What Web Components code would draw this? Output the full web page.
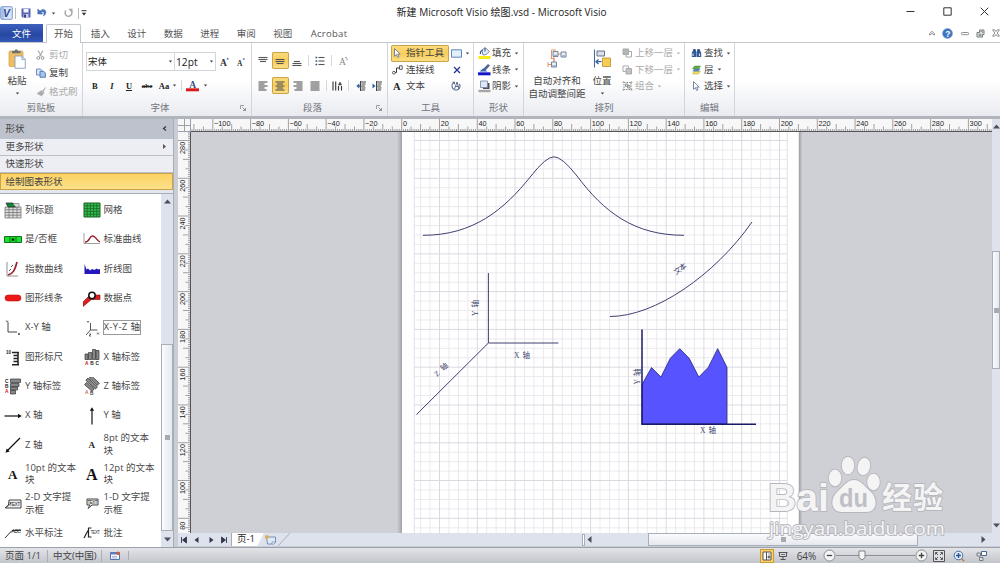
<!DOCTYPE html>
<html>
<head>
<meta charset="utf-8">
<title>新建 Microsoft Visio 绘图.vsd - Microsoft Visio</title>
<style>
  body {
    margin: 0;
    overflow: hidden;
    font: 9.5px/12px "Open Sans", "Noto Sans CJK SC", sans-serif;
    color: #444;
  }
</style>
</head>
<body>
<visio-window></visio-window>
<script>
const define = (name, html, init) => {
  const templ = document.createElement("template");
  templ.innerHTML = html;
  customElements.define(name, class extends HTMLElement {
    constructor() {
      super();
      this.attachShadow({mode: "open"});
      this.shadowRoot.appendChild(templ.content.cloneNode(true));
    }
    connectedCallback() {
      if (init) init(this, this.shadowRoot);
    }
  });
};

const lines = (rows) => rows.map(([x, y, w]) => `<path d="M${x} ${y}h${w}" stroke="#555" stroke-width="1.1"/>`).join("");

// name: [width, height, svg content]
const icons = {
  logo: [13, 14, `<rect x=".7" y=".7" width="11.6" height="12.6" rx="1" fill="#dbe6f7" stroke="#7d9cd0"/><path d="M1 1h3v12H1z" fill="#a9c0e6"/><text x="3" y="11" font-size="10.5" font-weight="bold" font-style="italic" font-family="Liberation Sans" fill="#2b4c9b">V</text>`],
  save: [10, 10, `<path d="M.5.5h9v9h-8l-1-1z" fill="#5663b5"/><path d="M2.500 1h5v3.500h-5z" fill="#f2f4fb"/><path d="M2.500 6h5v3.500h-5z" fill="#cfd4ea"/><path d="M3 6.500h2v3H3z" fill="#333f80"/>`],
  undo: [10, 10, `<path d="M.8 1v5h5L4.200 4.300c1.800-1.300 3.800-.3 2.300 3.700C10.300 5.500 9.300 1.200 5.500 1.600L3 3z" fill="#4a70b8" stroke="#4a70b8" stroke-width=".6"/>`],
  redo: [9, 10, `<path d="M6.500 2.200A3.400 3.400 0 1 1 2 2.600" fill="none" stroke="#aaa" stroke-width="1.500"/><path d="M4 1l4.500-.5v4z" fill="#aaa"/>`],
  caret: [5, 3, `<path d="M.8.5h3.400L2.500 2.500z" fill="#444"/>`],
  more: [6, 6, `<path d="M.5.7h5" stroke="#333"/><path d="M.7 2.800h4.600L3 5.500z" fill="#333"/>`],
  winmin: [9, 9, `<path d="M.5 4.500h8" stroke="#333"/>`],
  winmax: [9, 9, `<path d="M.8.8h7.400v7.400H.8z" fill="none" stroke="#333"/>`],
  winclose: [9, 9, `<path d="M.7.7l7.600 7.600m0-7.600L.7 8.300" stroke="#333"/>`],
  up: [8, 8, `<path d="M1.500 6V4.700L4 2.300l2.500 2.400V6L4 4.500z" fill="#fff" stroke="#777" stroke-width=".8"/>`],
  help: [11, 11, `<circle cx="5.500" cy="5.500" r="5" fill="#3e74bd" stroke="#87a9d8" stroke-width=".7"/><text x="3.200" y="8.600" font-size="8.500" font-weight="bold" font-family="Liberation Sans" fill="#fff">?</text>`],
  mdimin: [8, 8, `<rect x=".5" y="3.500" width="7" height="2.200" rx=".8" fill="#fff" stroke="#777" stroke-width=".8"/>`],
  mdirestore: [9, 9, `<path d="M3.500 1h4.500v4.500h-1.500v2.500H1V3.500h2.500z" fill="#dde3e0" stroke="#6b706e" stroke-width=".9"/><path d="M3 5.200h2v1.300H3zM4.500 2.500h2v1.500" fill="#fff" stroke="#6b706e" stroke-width=".7"/>`],
  mdiclose: [8, 8, `<path d="M.6.8h2L4 2.500 5.400.8h2L5.200 4l2.200 3.200h-2L4 5.500 2.600 7.200h-2L2.800 4z" fill="#fff" stroke="#777" stroke-width=".8"/>`],

  paste: [18, 20, `<rect x="1" y="2" width="14" height="15.500" rx="1.200" fill="#edbd62" stroke="#d19d43" stroke-width=".7"/><path d="M4 3.500V2h2.500c0-2 3.500-2 3.500 0h2.500v2.200H4z" fill="#6e7078"/><path d="M7 7h7l3.300 3.300V19.300H7z" fill="#fbfdff" stroke="#7d92b5" stroke-width=".8"/><path d="M13.800 7v3.500h3.500" fill="#c9d8ed" stroke="#7d92b5" stroke-width=".6"/>`],
  cut: [9, 10, `<path d="M2 .5l3.500 6M7 .5L3.500 6.500" stroke="#aaa" stroke-width="1.200"/><circle cx="2.300" cy="8" r="1.400" fill="none" stroke="#999"/><circle cx="6.600" cy="8" r="1.400" fill="none" stroke="#999"/>`],
  copy: [10, 10, `<path d="M.5 1h4l1.500 1.500V7H.5z" fill="#dbe7f8" stroke="#4c74b5" stroke-width=".8"/><path d="M4 3.300h3.700l1.700 1.700v4.300H4z" fill="#a9c4ec" stroke="#3f67a8" stroke-width=".8"/>`],
  brush: [10, 10, `<path d="M9.500.5L6 4.500l1 1.200zM5.500 3.500l2.500 2.700-2.500 2.800L1 6.500z" fill="#aaa" stroke="#aaa" stroke-width=".5"/>`],
  launcher: [6, 6, `<path d="M.5 4V.5H4" fill="none" stroke="#888" stroke-width=".8"/><path d="M2.500 2.500l3 3M5.500 3v2.500H3" fill="none" stroke="#888" stroke-width=".9"/>`],
  bigA: [9, 10, `<text x="0" y="9" font-size="9.500" font-weight="bold" font-family="Liberation Serif" fill="#333">A</text><path d="M6.500 2.500l1.200-2 1.200 2z" fill="#3d5d9b"/>`],
  smallA: [9, 10, `<text x="0" y="9" font-size="7.500" font-weight="bold" font-family="Liberation Serif" fill="#333">A</text><path d="M5.500 1.500h2.600L6.800 3.300z" fill="#3d5d9b"/>`],
  fontcolor: [13, 13, `<text x="3.200" y="8.500" font-size="9.500" font-weight="bold" font-family="Liberation Serif" fill="#345089">A</text><path d="M0 9.300h13v3H0z" fill="#da1a1a"/>`],

  vtop: [10, 12, lines([[.5, 2.500, 9], [.5, 4.500, 9], [2, 6.500, 6]])],
  vmid: [10, 12, lines([[.5, 4.500, 9], [.5, 6.500, 9], [1.500, 8.500, 7]])],
  vbot: [10, 12, lines([[2, 6.500, 6], [.5, 8.500, 9], [.5, 10.500, 9]])],
  left: [10, 10, lines([[.5, 1, 9], [.5, 3, 6], [.5, 5, 9], [.5, 7, 6], [.5, 9, 8]])],
  center: [10, 10, lines([[.5, 1, 9], [2, 3, 6], [.5, 5, 9], [2, 7, 6], [.5, 9, 9]])],
  right: [10, 10, lines([[.5, 1, 9], [3.500, 3, 6], [.5, 5, 9], [3.500, 7, 6], [1.500, 9, 8]])],
  justify: [10, 10, lines([[.5, 1, 9], [.5, 3, 9], [.5, 5, 9], [.5, 7, 9], [.5, 9, 9]])],
  bullets: [10, 10, lines([[3.500, 1.500, 6], [3.500, 5, 6], [3.500, 8.500, 6]]) + `<path d="M.5 1.500h1.700M.5 5h1.700M.5 8.500h1.700" stroke="#3a4f7d" stroke-width="1.600"/>`],
  rotA: [9, 10, `<text x="0" y="9" font-size="9.500" font-family="Liberation Serif" fill="#888">A</text><path d="M6 1.500c2-.5 2.500 1 2 3" fill="none" stroke="#888" stroke-width=".8"/>`],
  vtext: [11, 10, `<path d="M1 .5v9M3.700.5v9M6.500 5v4.500M9.500 5v4.500" stroke="#333" stroke-width="1.100"/><path d="M6.500 4L8 1l1.500 3z" fill="#444" stroke="#444" stroke-width=".6"/>`],
  outdent: [10, 10, lines([[4, 1, 6], [5.500, 3, 4], [5.500, 7, 4], [4, 9, 5]]) + `<path d="M.3 5l3-2.500v5z" fill="#315ea8"/><path d="M3 5h6M4.500 0v10" stroke="#444"/>`],
  indent: [10, 10, lines([[4, 1, 6], [5.500, 3, 4], [5.500, 7, 4], [4, 9, 5]]) + `<path d="M3.500 5l-3-2.500v5z" fill="#315ea8"/><path d="M4 5h5M4.500 0v10" stroke="#444"/>`],

  pointer: [10, 10, `<path d="M2.500.5v7.800l1.900-1.700 1.200 2.800 1.300-.6-1.200-2.700h2.500z" fill="#fff" stroke="#5a6b8f" stroke-width=".8"/>`],
  connector: [11, 10, `<path d="M2 7.500h2.500V3h4" fill="none" stroke="#333"/><circle cx="1.900" cy="7.700" r="1.400" fill="#fff" stroke="#333" stroke-width=".8"/><path d="M7.500.8h2.700v3.500H7.500z" fill="#fff" stroke="#333" stroke-width=".8"/>`],
  textA: [10, 10, `<text x="1" y="9" font-size="10.500" font-weight="bold" font-family="Liberation Serif" fill="#222">A</text>`],
  rect: [11, 9, `<path d="M.5.8h10v7.400H.5z" fill="#e3eefb" stroke="#5f85bb"/>`],
  cross: [8, 8, `<path d="M1 1l6 6m0-6L1 7" stroke="#23339a" stroke-width="1.300"/>`],
  textblock: [10, 10, `<path d="M3 1.500A4 4 0 1 0 8.500 3" fill="none" stroke="#5b6c91" stroke-width="1.200"/><path d="M3.500 8L6 1l2 7M4.500 5.500h3" stroke="#4b5b80" stroke-width=".9" fill="none"/><path d="M1 .7h3v3z" fill="#5b6c91"/>`],
  fill: [13, 13, `<path d="M4 3l3-2.500 4.500 4L8 7.500 5 8z" fill="#e9eef6" stroke="#59719b" stroke-width=".8"/><path d="M4.500 3c-2 1-2.500 2.500-2 4M7 1v3.500" stroke="#34588f" stroke-width="1.100" fill="none"/><path d="M.5 9h12v3H.5z" fill="#f6ec17"/>`],
  line: [13, 13, `<path d="M4 7l6-6 2 1.500L7 8z" fill="#50678f"/><path d="M1.500 8.500h8L5 5.500z" fill="#3764b5"/><path d="M0 9.300h12.500v3H0z" fill="#1318c6"/>`],
  shadow: [13, 13, `<path d="M5 3h6.500v6H5z" fill="#4b5058"/><path d="M2.500 1h7v6.500h-7z" fill="#dfe9f7" stroke="#71849f" stroke-width=".8"/><path d="M.5 9.800h12v2.400H.5z" fill="#a5a5a5"/>`],
  align: [20, 20, `<path d="M9 5h5M7 7v8M1 15.500h4" stroke="#e08b5b" stroke-width=".9"/><path d="M9 1H4.500v8M3.500 9.500h3.500v3M1 13v5" fill="none" stroke="#e08b5b" stroke-width=".9"/><g fill="#e8eef7" stroke="#667890" stroke-width=".9"><path d="M6 2.500h5v5H6zM14 3h5v5h-5zM4.500 13h5v5h-5z"/></g><path d="M6.500 5.700h4v1.500h-4zM14.500 6.200h4v1.500h-4zM5 16.200h4v1.500H5z" fill="#9aacc6"/>`],
  position: [18, 19, `<path d="M1.500.5v18" stroke="#4d6898" stroke-width="1.100"/><path d="M4 2h7.500v5H4z" fill="#dadfe9" stroke="#596778" stroke-width=".9"/><path d="M9.500 9h8v8.500h-8z" fill="#f6cb59" stroke="#c59732" stroke-width=".9"/><path d="M3 12.700h5.500M5.500 10.500L3 12.700 5.500 15" fill="none" stroke="#3563aa" stroke-width="1.300"/>`],
  forward: [11, 10, `<path d="M4 3.500h5.500V9H4z" fill="#fff" stroke="#aaa"/><path d="M1 1h5.500v5.500H1z" fill="#b5b5b5" stroke="#aaa"/>`],
  backward: [11, 10, `<path d="M1 1h5.500v5.500H1z" fill="#fff" stroke="#aaa"/><path d="M4 3.500h5.500V9H4z" fill="#c2c2c2" stroke="#aaa"/>`],
  group: [11, 10, `<path d="M2 1.500h7v7H2z" fill="none" stroke="#888" stroke-dasharray="1.500 1"/><path d="M3.500 3h2.500v2.500H3.500zM5.500 4.500H8V7H5.500z" fill="#ddd" stroke="#888" stroke-width=".8"/><path d="M.7.500h1.600v1.600H.7zM8.700.500h1.600v1.600H8.700zM.7 7.800h1.600v1.600H.7zM8.700 7.800h1.600v1.600H8.700z" fill="#999"/>`],
  find: [11, 10, `<path d="M2.500 1h2l.8 3v5H.8V5zM6.500 1h2l1.700 4v4H5.700V4z" fill="#315795"/><path d="M2 5.500v2.500M8.500 5.500v2.500" stroke="#cfdef5" stroke-width="1.200"/>`],
  layers: [11, 10, `<path d="M3.500 6h6L7.500 9h-6z" fill="#f3df5b" stroke="#b3a240" stroke-width=".5"/><path d="M3.500 3.500h6L7.500 6.500h-6z" fill="#5a84c8"/><path d="M3.500 1h6L7.500 4h-6z" fill="#61ad4d" stroke="#3f8b32" stroke-width=".5"/>`],

  // stencil masters
  header: [18, 18, `<path d="M1 6h16v11H1zM1 8.700h16M1 11.500h16M1 14.200h16M5 6v11M9 6v11M13 6v11" fill="#ddd" stroke="#777" stroke-width=".8"/><path d="M2 2h7l3 4H4z" fill="#17843a" stroke="#222" stroke-width=".7"/><path d="M9 2.500h6v3.500h-3" fill="#ddd" stroke="#777" stroke-width=".7"/>`],
  grid: [18, 18, `<path d="M1 2h16v14H1z" fill="#35bb4c" stroke="#175f24"/><path d="M4.200 2v14M7.400 2v14M10.600 2v14M13.800 2v14M1 4.800h16M1 7.600h16M1 10.400h16M1 13.200h16" stroke="#1b6e2b" stroke-width=".9"/>`],
  yesno: [18, 18, `<path d="M.5 6.500h17v6H.5z" fill="#17e52c" stroke="#176b23"/><path d="M6 6v7M12 6v7" stroke="#176b23"/><circle cx="9" cy="9.500" r="1.500" fill="#103b14"/>`],
  bell: [18, 18, `<path d="M1 3v10.500h16" fill="none" stroke="#777" stroke-width=".7"/><path d="M2 12c5 0 4-6 7.500-6S13 10 17 12" fill="none" stroke="#941c2b" stroke-width="1.300"/>`],
  exp: [18, 18, `<path d="M3 2v14h11" fill="none" stroke="#777" stroke-width=".8"/><path d="M4 15c5-1 7-5 9-13" fill="none" stroke="#a01f2b" stroke-width="1.700"/><path d="M5 11l2-2M7 7l2-2" stroke="#555"/>`],
  area: [18, 18, `<path d="M1.500 4v10H17V9l-2 .5-1.500-1-2 1.500L9 9 7 10.500 5 8.500 3.500 9.500z" fill="#2418bd"/>`],
  bar: [18, 18, `<rect x="1" y="6" width="16" height="6" rx="3" fill="#ee1717" stroke="#b91515" stroke-width=".6"/>`],
  point: [18, 18, `<path d="M0 13l7-7h10v4.500H8.500L0 17.500z" fill="#e31d1d" stroke="#711" stroke-width=".6"/><circle cx="9" cy="6.500" r="3.200" fill="#fff" stroke="#111" stroke-width="1.500"/>`],
  xy: [18, 18, `<path d="M4 3v10h9" fill="none" stroke="#444"/><path d="M2 1.500l1 1.500 1-1.500M14 14l2 2m0-2l-2 2" stroke="#333" stroke-width=".7" fill="none"/>`],
  xyz: [18, 18, `<path d="M7.500 4v7h7M7.500 11L3 16" fill="none" stroke="#555"/><path d="M4 2l1 1.500 1-1.500M14 13.500l2 2m0-2l-2 2M6 15h2l-2 2h2" stroke="#333" stroke-width=".7" fill="none"/>`],
  scale: [18, 18, `<path d="M14 4v13.500M8 4.500h7M9.500 7.500h5M9.500 10.500h5M9.500 13.500h5M8 16.800h7" stroke="#222" stroke-width="1.500"/><text x="2" y="5.500" font-size="4.500" font-family="Liberation Sans" font-weight="bold" fill="#222">10</text>`],
  xlab: [18, 18, `<path d="M2 6h3v5.500H2zM5.500 4.500h3.200v7H5.500zM9.500 1.500h3v10h-3zM13 2.500h3v9h-3z" fill="#888" stroke="#333" stroke-width=".7"/><g font-size="4.800" font-family="Liberation Sans" font-weight="bold"><text x="2" y="17.300" fill="#c12">A</text><text x="7.200" y="17.300" fill="#222">B</text><text x="12.500" y="17.300" fill="#222">C</text></g>`],
  ylab: [18, 18, `<path d="M6.500 2h10v3.500h-10zM6.500 6.500H15V9.500H6.500zM6.500 10h7v3h-7zM6.500 13.500h5v3.500h-5z" fill="#888" stroke="#333" stroke-width=".7"/><g font-size="4.800" font-family="Liberation Sans" font-weight="bold"><text x="1" y="5.500" fill="#222">C</text><text x="1" y="10.500" fill="#222">B</text><text x="1" y="15.500" fill="#c12">A</text></g>`],
  zlab: [18, 18, `<g transform="rotate(42 8 8)" fill="#888" stroke="#333" stroke-width=".7"><path d="M2 1h11v3H2zM1 5h13v3H1zM3 9h10v3H3z"/></g><text x="2" y="16.500" font-size="4.800" font-weight="bold" font-family="Liberation Sans" fill="#c66">A</text><text x="7" y="17.500" font-size="4.800" font-weight="bold" font-family="Liberation Sans" fill="#444">B</text>`],
  xaxis: [18, 18, `<path d="M.5 9H15" stroke="#111" stroke-width="1.200"/><path d="M14 6.800L17.800 9 14 11.200z" fill="#111"/>`],
  yaxis: [18, 18, `<path d="M9 17.500V3" stroke="#111" stroke-width="1.200"/><path d="M6.800 3.800L9 .2l2.200 3.600z" fill="#111"/>`],
  zaxis: [18, 18, `<path d="M16 2L3 15" stroke="#111" stroke-width="1.200"/><path d="M1.500 16.700l1.200-4.200 3 3z" fill="#111"/>`],
  a8: [18, 18, `<text x="5.500" y="11.500" font-size="9" font-weight="bold" font-family="Liberation Serif" fill="#222">A</text>`],
  a10: [18, 18, `<text x="4" y="13.500" font-size="13" font-weight="bold" font-family="Liberation Serif" fill="#111">A</text>`],
  a12: [18, 18, `<text x="3" y="14.500" font-size="16" font-weight="bold" font-family="Liberation Serif" fill="#111">A</text>`],
  callout2: [18, 18, `<path d="M5 5h12v8H1.500l3-3z" fill="#eee" stroke="#444"/><text x="5.300" y="10.800" font-size="5" textLength="11" font-family="Liberation Sans" fill="#333">TEXT</text><path d="M1 13L7 8" stroke="#444"/>`],
  callout1: [18, 18, `<path d="M4 4h11v6H9l-4 3.500L7 10H4z" fill="#eee" stroke="#444"/><text x="4.500" y="9" font-size="4.500" textLength="10" font-family="Liberation Sans" fill="#333">TEXT</text>`],
  hcall: [18, 18, `<path d="M1 14L8 6.500h9" fill="none" stroke="#333"/><text x="7.500" y="8.500" font-size="5" textLength="9.500" font-family="Liberation Sans" font-style="italic" fill="#222">ABC</text>`],
  note: [18, 18, `<path d="M1 14L5 6.500M8.500 4H5.500v9h3" fill="none" stroke="#222" stroke-width="1.200"/><text x="7.500" y="9.500" font-size="4.500" textLength="9.500" font-family="Liberation Sans" fill="#444">TEXT</text>`],

  // sheet tabs and status bar
  first: [8, 8, `<path d="M1.500 1v6M6.500 1v6L2.500 4z" stroke="#303b4d" stroke-width=".9" fill="#303b4d"/>`],
  prev: [8, 8, `<path d="M5.500 1v6l-4-3z" fill="#303b4d"/>`],
  next: [8, 8, `<path d="M2.500 1v6l4-3z" fill="#303b4d"/>`],
  last: [8, 8, `<path d="M6.500 1v6M1.500 1v6l4-3z" stroke="#303b4d" stroke-width=".9" fill="#303b4d"/>`],
  newpage: [13, 11, `<path d="M2.500 3h9v5.500l-2 1.500h-6z" fill="#e1e9f5" stroke="#6c86ae" stroke-width=".9"/><path d="M8 10V8h3.500" fill="#fff" stroke="#6c86ae" stroke-width=".7"/><circle cx="2.800" cy="3" r="2" fill="#e2ad56"/>`],
  macro: [10, 9, `<path d="M.5 1.500h9v7h-9z" fill="#f4f6fb" stroke="#5475ab"/><path d="M.5 1.500h9v2h-9z" fill="#5b82bf"/><circle cx="8" cy="2.200" r="1.700" fill="#d65a39"/><path d="M2 5.500h5M2 7h5" stroke="#8aa1c8" stroke-width=".7"/>`],
  normal: [10, 10, `<path d="M1 1h8v8H1zM4.500 1v8" fill="#fff" stroke="#555"/><path d="M6 3h2M6 5h2v2H6z" fill="#888" stroke="#555" stroke-width=".6"/>`],
  fullscreen: [10, 10, `<path d="M.5 1.500h9M1.500 1.500V5.500h7v-4M5 5.500V8M2.500 8.500h5" fill="none" stroke="#555"/><path d="M3 3.500h4" stroke="#777"/>`],
  minus: [13, 13, `<circle cx="6.500" cy="6.500" r="5.500" fill="#f3f4f6" stroke="#777" stroke-width=".8"/><path d="M3.800 6.500h5.400" stroke="#444" stroke-width="1.300"/>`],
  plus: [13, 13, `<circle cx="6.500" cy="6.500" r="5.500" fill="#f3f4f6" stroke="#777" stroke-width=".8"/><path d="M3.800 6.500h5.400M6.500 3.800v5.400" stroke="#444" stroke-width="1.300"/>`],
  thumb: [8, 11, `<path d="M1 1h6v6.500L4 10 1 7.500z" fill="#f7f7f8" stroke="#777" stroke-width=".9"/>`],
  fit: [12, 12, `<path d="M.5.5h11v11H.5z" fill="#dfe1e5" stroke="#555"/><path d="M2.500 4.500v-2h2M7.500 2.500h2v2M9.500 7.500v2h-2M4.500 9.500h-2v-2M3 3l2 2M9 3L7 5M9 9L7 7M3 9l2-2" fill="none" stroke="#444" stroke-width=".9"/>`],
  pan: [12, 12, `<circle cx="5.500" cy="5.500" r="4.300" fill="#e9f0fa" stroke="#456fae"/><path d="M3 5.500h5M5.500 3v5" stroke="#2d5597" stroke-width="1.500"/><path d="M8.700 8.700l2.500 2.500" stroke="#b9853c" stroke-width="1.600"/>`],
  switch: [12, 12, `<path d="M5.500 1.500h5v4h-5z" fill="#fff" stroke="#4a6794"/><path d="M1 3h3.500v3H1zM3.500 7.500H7v3H3.500z" fill="#dbe3f0" stroke="#666" stroke-width=".8"/>`],
};

customElements.define("v-icon", class extends HTMLElement {
  constructor() {
    super();
    this.attachShadow({mode: "open"});
  }
  connectedCallback() {
    const [w, h, body] = icons[this.getAttribute("name")];
    this.shadowRoot.innerHTML = `
      <style>
        :host { display: inline-block; flex: none; width: ${w}px; height: ${h}px; }
        svg { display: block; }
      </style>
      <svg width="${w}" height="${h}" viewBox="0 0 ${w} ${h}">${body}</svg>`;
  }
});

define("title-bar", `
<style>
  :host {
    display: grid;
    grid-template-columns: 390px 1fr 387px;
    align-items: center;
    height: 24px;
    background: #fff;
    color: #222;
  }
  #quick { display: flex; align-items: center; padding-top: 2px; }
  #quick i { width: 1px; height: 11px; background: #bbb; }
  #name {
    white-space: nowrap;
    text-align: center;
    font-size: 10px;
    letter-spacing: .02px;
  }
  #window { display: flex; justify-content: flex-end; gap: 28px; padding: 0 11px 2px 0; }
</style>
<div id="quick">
  <v-icon name="logo"></v-icon>
  <i style="margin: 0 5px 0 2px"></i>
  <v-icon name="save"></v-icon>
  <v-icon name="undo" style="margin-left: 6px"></v-icon>
  <v-icon name="caret" style="margin: 0 8px 0 4px"></v-icon>
  <v-icon name="redo"></v-icon>
  <i style="margin: 0 2px 0 5px"></i>
  <v-icon name="more"></v-icon>
</div>
<div id="name"><slot></slot></div>
<div id="window">
  <v-icon name="winmin"></v-icon>
  <v-icon name="winmax"></v-icon>
  <v-icon name="winclose"></v-icon>
</div>`);

define("ribbon-tabs", `
<style>
  :host {
    display: flex;
    height: 19px;
    box-sizing: border-box;
    background: #fff;
    border-bottom: 1px solid #c3c6cb;
    color: #555;
  }
  span {
    width: 36.500px;
    line-height: 19px;
    text-align: center;
  }
  #file {
    width: 43px;
    margin-right: 3px;
    color: #fff;
    background: linear-gradient(#3c62bd, #2747a1 60%, #3459b8);
  }
  #home {
    width: 35px;
    margin-right: 1px;
    height: 19px;
    box-sizing: border-box;
    border: 1px solid #c3c6cb;
    border-bottom: 0;
    border-radius: 2px 2px 0 0;
    background: #fff;
    line-height: 18px;
  }
  #acrobat { width: 56px; letter-spacing: .3px; }
  #tools { display: flex; align-items: center; gap: 7px; margin-left: auto; }
</style>
<span id="file">文件</span><span id="home">开始</span><span>插入</span><span>设计</span><span>数据</span><span>进程</span><span>审阅</span><span>视图</span><span id="acrobat">Acrobat</span>
<div id="tools">
  <v-icon name="up"></v-icon>
  <v-icon name="help" style="margin: 0 1px 0 -1px"></v-icon>
  <v-icon name="mdimin"></v-icon>
  <v-icon name="mdirestore"></v-icon>
  <v-icon name="mdiclose"></v-icon>
</div>`);

define("ribbon-group", `
<style>
  :host {
    display: flex;
    flex-direction: column;
    box-sizing: border-box;
    height: 73px;
    border-right: 1px solid #d3d5da;
  }
  #content { flex: 1; min-height: 0; }
  #label {
    display: grid;
    align-items: center;
    height: 14px;
    padding-bottom: 1px;
    text-align: center;
    color: #71757c;
  }
  :host([launcher]) #label { grid-template-columns: 1fr 11px; padding-left: 0; }
  :host([launcher]) span { padding-right: 3px; }
</style>
<div id="content"><slot></slot></div>
<div id="label"><span></span></div>`,
(host, root) => {
  root.querySelector("span").textContent = host.getAttribute("label");
  if (host.hasAttribute("launcher") && !root.querySelector("v-icon")) {
    const icon = document.createElement("v-icon");
    icon.setAttribute("name", "launcher");
    root.querySelector("#label").appendChild(icon);
  }
});

define("ribbon-button", `
<style>
  :host {
    display: flex;
    align-items: center;
    height: 16.500px;
    white-space: nowrap;
    box-sizing: border-box;
  }
  :host([disabled]) { color: #aaa; }
  :host([disabled]) #caret { opacity: .4; }
  :host([on]) {
    background: linear-gradient(#fbdc7d, #f8ce5c 50%, #fbe08a);
    box-shadow: inset 0 0 0 1px #c9a24b;
    border-radius: 2px;
  }
  #icon { display: flex; justify-content: center; width: var(--icon, 13px); margin-right: var(--gap, 2px); }
  #caret { margin-left: 3px; }
</style>
<div id="icon"></div><slot></slot>`,
(host, root) => {
  root.querySelector("#icon").innerHTML = `<v-icon name="${host.getAttribute("icon")}"></v-icon>`;
  if (host.hasAttribute("menu")) root.innerHTML += `<v-icon id="caret" name="caret"></v-icon>`;
});

define("big-button", `
<style>
  :host {
    display: flex;
    flex-direction: column;
    align-items: center;
    text-align: center;
    line-height: 13px;
    white-space: nowrap;
  }
  #icon { height: 20px; padding: 6px 0 5px; }
</style>
<div id="icon"></div><slot></slot>`,
(host, root) => {
  root.querySelector("#icon").innerHTML = `<v-icon name="${host.getAttribute("icon")}"></v-icon>`;
  if (host.hasAttribute("menu")) root.innerHTML += `<v-icon name="caret" style="margin-top: 5px"></v-icon>`;
});

define("visio-ribbon", `
<style>
  :host {
    display: flex;
    height: 76px;
    box-sizing: border-box;
    background: linear-gradient(#fff 50%, #e9ebf0);
    border-bottom: 3px solid #b0b4bb;
  }
  .row { display: flex; align-items: center; }
  .cell { display: flex; justify-content: center; align-items: center; height: 17px; box-sizing: border-box; }
  .on {
    background: linear-gradient(#fbdc7d, #f8ce5c 50%, #fbe08a);
    box-shadow: inset 0 0 0 1px #c9a24b;
    border-radius: 2px;
  }
  .sep { display: flex; justify-content: center; }
  .sep::before { content: ""; width: 1px; height: 11px; background: #d5d7db; }
  .combo {
    display: flex;
    align-items: center;
    justify-content: space-between;
    height: 19px;
    box-sizing: border-box;
    border: 1px solid #d3d5d9;
    background: #fff;
    padding: 0 1px;
    color: #222;
  }
  .serif { font: bold 8.500px/12px "Liberation Serif", serif; color: #222; }

  #clip { display: grid; grid-template-columns: 34px 1fr; }
  #clip .stack { padding-top: 3px; }
  #clip ribbon-button { height: 18.300px; }
  #font { padding: 9px 0 0 3px; }
  #font .row + .row { padding-top: 6px; }
  #para { padding: 9px 0 0 2.500px; }
  #para .row + .row { padding-top: 8px; }
  #tools { display: grid; grid-template-columns: 58px 1fr; gap: 0 2px; padding: 2px 0 0 3px; --icon: 12px; --gap: 3px; }
  #tools .row { height: 16.500px; gap: 3px; }
  #tools .row v-icon:first-child { width: 11px; }
  .stack { padding-top: 2px; }
  #arrange { display: grid; grid-template-columns: 66px 24px 1fr; }
  #arrange .stack { padding-left: 7px; --icon: 12px; }
</style>
<ribbon-group label="剪贴板" style="width: 83px"><div id="clip">
  <big-button icon="paste" menu>粘贴</big-button>
  <div class="stack">
    <ribbon-button icon="cut" disabled>剪切</ribbon-button>
    <ribbon-button icon="copy">复制</ribbon-button>
    <ribbon-button icon="brush" disabled>格式刷</ribbon-button>
  </div>
</div></ribbon-group>
<ribbon-group label="字体" launcher style="width: 169px"><div id="font">
  <div class="row">
    <div class="combo" style="width: 89px">宋体<v-icon name="caret"></v-icon></div>
    <div class="combo" style="width: 41px; border-left: 0; font-size: 10.200px">12pt<v-icon name="caret"></v-icon></div>
    <v-icon name="bigA" style="margin: 0 8px 0 4px"></v-icon>
    <v-icon name="smallA"></v-icon>
  </div>
  <div class="row serif">
    <span class="cell" style="width: 17.500px">B</span>
    <span class="cell" style="width: 17px"><i>I</i></span>
    <span class="cell" style="width: 17px"><u>U</u></span>
    <span class="cell" style="width: 19px; font-size: 7px"><s>abe</s></span>
    <span class="cell" style="width: 15px">Aa</span>
    <v-icon name="caret"></v-icon>
    <span class="sep" style="width: 9px"></span>
    <v-icon name="fontcolor"></v-icon>
    <v-icon name="caret" style="margin-left: 4px"></v-icon>
  </div>
</div></ribbon-group>
<ribbon-group label="段落" launcher style="width: 136px"><div id="para">
  <div class="row">
    <span class="cell" style="width: 17px"><v-icon name="vtop"></v-icon></span>
    <span class="cell on" style="width: 17px"><v-icon name="vmid"></v-icon></span>
    <span class="cell" style="width: 17px"><v-icon name="vbot"></v-icon></span>
    <span class="sep" style="width: 5px"></span>
    <span class="cell" style="width: 19px"><v-icon name="bullets"></v-icon></span>
    <span class="sep" style="width: 4px"></span>
    <span class="cell" style="width: 19px"><v-icon name="rotA"></v-icon></span>
  </div>
  <div class="row">
    <span class="cell" style="width: 17px"><v-icon name="left"></v-icon></span>
    <span class="cell on" style="width: 17px"><v-icon name="center"></v-icon></span>
    <span class="cell" style="width: 18px"><v-icon name="right"></v-icon></span>
    <span class="cell" style="width: 16px"><v-icon name="justify"></v-icon></span>
    <span class="sep" style="width: 7px"></span>
    <span class="cell" style="width: 15px"><v-icon name="vtext"></v-icon></span>
    <span class="sep" style="width: 8px"></span>
    <span class="cell" style="width: 16px"><v-icon name="outdent"></v-icon></span>
    <span class="cell" style="width: 16px"><v-icon name="indent"></v-icon></span>
  </div>
</div></ribbon-group>
<ribbon-group label="工具" style="width: 86px"><div id="tools">
  <ribbon-button icon="pointer" on>指针工具</ribbon-button>
  <div class="row"><v-icon name="rect"></v-icon><v-icon name="caret"></v-icon></div>
  <ribbon-button icon="connector">连接线</ribbon-button>
  <div class="row"><v-icon name="cross" style="margin-left: 2px"></v-icon></div>
  <ribbon-button icon="textA">文本</ribbon-button>
  <div class="row"><v-icon name="textblock"></v-icon></div>
</div></ribbon-group>
<ribbon-group label="形状" style="width: 50px"><div class="stack" style="padding-left: 4px; --gap: 1px">
  <ribbon-button icon="fill" menu>填充</ribbon-button>
  <ribbon-button icon="line" menu>线条</ribbon-button>
  <ribbon-button icon="shadow" menu>阴影</ribbon-button>
</div></ribbon-group>
<ribbon-group label="排列" style="width: 161px"><div id="arrange">
  <big-button icon="align">自动对齐和<br>自动调整间距</big-button>
  <big-button icon="position" menu>位置</big-button>
  <div class="stack">
    <ribbon-button icon="forward" disabled menu>上移一层</ribbon-button>
    <ribbon-button icon="backward" disabled menu>下移一层</ribbon-button>
    <ribbon-button icon="group" disabled menu>组合</ribbon-button>
  </div>
</div></ribbon-group>
<ribbon-group label="编辑" style="width: 50px"><div class="stack" style="padding-left: 5px; --icon: 12px">
  <ribbon-button icon="find" menu>查找</ribbon-button>
  <ribbon-button icon="layers" menu>层</ribbon-button>
  <ribbon-button icon="pointer" menu>选择</ribbon-button>
</div></ribbon-group>`);

define("stencil-item", `
<style>
  :host {
    display: flex;
    align-items: center;
    gap: 3px;
    height: 29.360px;
    line-height: 12.500px;
    color: #484848;
  }
  #icon { display: flex; }
  span { width: 54px; white-space: nowrap; }
  :host([focused]) span {
    width: auto;
    outline: 1px solid #999;
    letter-spacing: .35px;
  }
</style>
<div id="icon"></div><span><slot></slot></span>`,
(host, root) => {
  root.querySelector("#icon").innerHTML = `<v-icon name="${host.getAttribute("icon")}"></v-icon>`;
});

define("scroll-bar", `
<style>
  :host {
    display: flex;
    flex-direction: column;
    align-items: center;
    box-sizing: border-box;
    background: #dde2ec;
  }
  :host([horizontal]) { flex-direction: row; }
  #thumb {
    display: flex;
    align-items: center;
    justify-content: center;
    box-sizing: border-box;
    align-self: stretch;
    border: 1px solid #a9afba;
    background: linear-gradient(90deg, #fbfbfd, #e5e8ee);
    flex: none;
  }
  :host([horizontal]) #thumb { background: linear-gradient(#fbfbfd, #e5e8ee); }
  #thumb::after { content: ""; width: 5px; height: 5px; background: #a6abb3; }
  svg { flex: none; }
  #before { flex: none; }
  #after { flex: 1; }
</style>
<svg width="9" height="9"><path/></svg><div id="before"></div><div id="thumb"></div><div id="after"></div><svg width="9" height="9"><path/></svg>`,
(host, root) => {
  const flat = host.hasAttribute("horizontal");
  const side = flat ? "width" : "height";
  const [a, b] = root.querySelectorAll("path");
  a.setAttribute("d", flat ? "M6.500 1v7L2.500 4.500z" : "M1 6.500h7L4.500 2.500z");
  b.setAttribute("d", flat ? "M2.500 1v7l4-3.500z" : "M1 2.500h7L4.500 6.500z");
  a.setAttribute("fill", "#4a505b");
  b.setAttribute("fill", "#4a505b");
  root.querySelector("#before").style[side] = host.getAttribute("start") + "px";
  root.querySelector("#thumb").style[side] = host.getAttribute("size") + "px";
});

define("shapes-pane", `
<style>
  :host {
    display: flex;
    flex-direction: column;
    width: 174px;
    box-sizing: border-box;
    border-right: 1px solid #a9adb6;
    background: #e4e7ed;
  }
  .bar {
    display: flex;
    align-items: center;
    justify-content: space-between;
    height: 17.300px;
    box-sizing: border-box;
    padding: 0 6px 0 5.500px;
    background: #eceef3;
    border-bottom: 1px solid #bcc0c9;
  }
  #head { height: 19.500px; background: #bdc2cc; border: 0; }
  #current { background: linear-gradient(#fcd363, #fde08a); border: 1px solid #c9a24b; padding-left: 4.500px; }
  #list {
    display: flex;
    flex: 1;
    margin-top: 3px;
    border-top: 1px solid #a9adb6;
    background: #fff;
    overflow: hidden;
  }
  #items {
    display: grid;
    grid-template-columns: 78.500px 1fr;
    align-content: start;
    width: 157px;
    padding: 1px 0 0 4px;
  }
  scroll-bar { width: 12px; padding: 3px 0; }
</style>
<div class="bar" id="head">形状<svg width="5" height="7"><path d="M4 1.500L1.500 3.500 4 5.500" fill="none" stroke="#333" stroke-width="1.200"/></svg></div>
<div class="bar">更多形状<svg width="5" height="7"><path d="M1 1l3 2.500L1 6z" fill="#555"/></svg></div>
<div class="bar">快速形状</div>
<div class="bar" id="current">绘制图表形状</div>
<div id="list">
  <div id="items">
    <stencil-item icon="header">列标题</stencil-item><stencil-item icon="grid">网格</stencil-item>
    <stencil-item icon="yesno">是/否框</stencil-item><stencil-item icon="bell">标准曲线</stencil-item>
    <stencil-item icon="exp">指数曲线</stencil-item><stencil-item icon="area">折线图</stencil-item>
    <stencil-item icon="bar">图形线条</stencil-item><stencil-item icon="point">数据点</stencil-item>
    <stencil-item icon="xy">X-Y 轴</stencil-item><stencil-item icon="xyz" focused>X-Y-Z 轴</stencil-item>
    <stencil-item icon="scale">图形标尺</stencil-item><stencil-item icon="xlab">X 轴标签</stencil-item>
    <stencil-item icon="ylab">Y 轴标签</stencil-item><stencil-item icon="zlab">Z 轴标签</stencil-item>
    <stencil-item icon="xaxis">X 轴</stencil-item><stencil-item icon="yaxis">Y 轴</stencil-item>
    <stencil-item icon="zaxis">Z 轴</stencil-item><stencil-item icon="a8">8pt 的文本<br>块</stencil-item>
    <stencil-item icon="a10">10pt 的文本<br>块</stencil-item><stencil-item icon="a12">12pt 的文本<br>块</stencil-item>
    <stencil-item icon="callout2">2-D 文字提<br>示框</stencil-item><stencil-item icon="callout1">1-D 文字提<br>示框</stencil-item>
    <stencil-item icon="hcall">水平标注</stencil-item><stencil-item icon="note">批注</stencil-item>
  </div>
  <scroll-bar start="138" size="187"></scroll-bar>
</div>`);

// One millimetre on the sheet, in screen pixels, at 64% zoom
const MM = 1.889;

// A ruler in millimetres: origin is where zero falls, in the ruler's own pixels
define("mm-ruler", `
<style>
  :host { display: block; background: #f7f7f8; overflow: hidden; }
  svg { display: block; }
</style>
<div></div>`,
(host, root) => {
  const vertical = host.hasAttribute("vertical");
  const length = +host.getAttribute("length");
  const origin = +host.getAttribute("origin");
  let ticks = "";
  let labels = "";
  for (let mm = -120; mm <= 320; mm++) {
    const p = vertical ? origin - mm * MM : origin + mm * MM;
    if (p < 0 || p > length) continue;
    const len = mm % 20 == 0 ? 13 : mm % 10 == 0 ? 8 : mm % 5 == 0 ? 5.500 : 3;
    ticks += vertical ? `M${13 - len} ${p.toFixed(1)}h${len}` : `M${p.toFixed(1)} ${13 - len}v${len}`;
    if (mm % 20 == 0) {
      const text = mm < 0 ? "−" + -mm : mm;
      labels += vertical
        ? `<text transform="translate(7.200 ${p + 13.500 - (mm < 100 ? 2 : 0)}) rotate(-90)">${text}</text>`
        : `<text x="${p + 1.200}" y="7">${text}</text>`;
    }
  }
  const [w, h] = vertical ? [13, length] : [length, 13];
  root.querySelector("div").innerHTML = `
    <svg width="${w}" height="${h}">
      <path d="${ticks}" stroke="#8c8c90" stroke-width=".8"/>
      <g font-family="Liberation Sans" font-size="7.300" fill="#222">${labels}</g>
      <path d="${vertical ? `M12.500 0v${h}` : `M0 12.500h${w}`}" stroke="#555"/>
    </svg>`;
});

define("drawing-page", `
<style>
  :host { display: block; overflow: hidden; background: #cfd0d5; }
  svg { display: block; }
  .label { font: 7.500px "Liberation Serif", "Noto Sans CJK SC", serif; fill: #42466f; }
</style>
<svg width="801" height="401" viewBox="191 132 801 401">
  <defs>
    <linearGradient id="edge"><stop offset="0" stop-color="#cfd0d5"/><stop offset="1" stop-color="#a2a3aa"/></linearGradient>
    <linearGradient id="edge2"><stop offset="0" stop-color="#97989f"/><stop offset="1" stop-color="#cfd0d5"/></linearGradient>
  </defs>
  <rect x="397" y="132" width="5" height="401" fill="url(#edge)"/>
  <rect x="798.500" y="132" width="4" height="401" fill="url(#edge2)"/>
  <rect x="402" y="132" width="396.700" height="401" fill="#fff"/>
  <g id="grid" stroke-width="1"></g>
  <g fill="none" stroke="#3f4070" stroke-width="1">
    <path d="M423 235.300C473 235.300 504 210 531 176Q546 156.800 554 156.800Q562 156.800 577 176C604 212 634 235.300 684 235.300"/>
    <path d="M610 316.500C655 316.500 715 275 752 222"/>
    <path d="M488.400 273v70h70M488.400 343L416.500 414.500"/>
  </g>
  <path d="M642 384.500L651.500 367.500L661 377L670.300 358.300L679.700 348.700L689.200 358.300L698.800 377L708.200 367.500L717.700 348.700L727 367.500V424H642Z" fill="#5754ff" stroke="#26266e" stroke-width=".8"/>
  <path d="M642 329.500V424.200H756" fill="none" stroke="#1b1a66" stroke-width="1.500"/>
  <g class="label">
    <text x="514" y="357.500" textLength="16">X 轴</text>
    <text transform="translate(477.500 316) rotate(-90)" textLength="16">Y 轴</text>
    <text transform="translate(437 377) rotate(-43)" textLength="16">Z 轴</text>
    <text transform="translate(676 275) rotate(-35)" textLength="14">文本</text>
    <text x="700" y="433" textLength="16">X 轴</text>
    <text transform="translate(639.500 384.500) rotate(-90)" textLength="16">Y 轴</text>
  </g>
</svg>`,
(host, root) => {
  // 5mm grid inside the print margins, with a stronger line every 20mm
  const x0 = 401.700, y0 = 178.300, left = 414, right = 787.300;
  let minor = "", major = "";
  for (let i = 2; i <= 40; i++) {
    const line = `M${(x0 + i * 5 * MM).toFixed(1)} 132v401`;
    if (i % 4) minor += line; else major += line;
  }
  for (let i = -4; i <= 37; i++) {
    const line = `M${left} ${(y0 + i * 5 * MM).toFixed(1)}H${right}`;
    if (i % 4) minor += line; else major += line;
  }
  root.querySelector("#grid").innerHTML = `
    <path d="${minor}" stroke="#ebe9ee"/><path d="${major}" stroke="#dbd9e0"/>
    <path d="M${left}.3 132v401M${right} 132v401" stroke="#e2e0e6"/>`;
});

define("page-tabs", `
<style>
  :host { display: flex; align-items: center; height: 13px; background: #dde2ec; color: #222; }
  #nav { display: flex; gap: 5.300px; padding: 0 3px 0 2px; }
  #tab {
    width: 27px;
    height: 13px;
    padding-left: 5px;
    background: #fff;
    clip-path: polygon(0 0, 100% 0, 80% 100%, 0 100%);
    border-left: 1px solid #aaa;
    white-space: nowrap;
  }
  #split { width: 3px; height: 12px; margin-left: auto; border: 1px solid #a9afba; box-sizing: border-box; background: #fff; }
  scroll-bar { width: 403px; height: 13px; margin-right: 12px; }
</style>
<div id="nav">
  <v-icon name="first"></v-icon><v-icon name="prev"></v-icon><v-icon name="next"></v-icon><v-icon name="last"></v-icon>
</div>
<div id="tab">页-1</div>
<v-icon name="newpage"></v-icon>
<svg width="14" height="13"><path d="M1 13L13 0" stroke="#aab0bb"/></svg>
<div id="split"></div>
<scroll-bar horizontal start="54" size="270"></scroll-bar>`);

define("status-bar", `
<style>
  :host {
    display: flex;
    align-items: center;
    height: 16px;
    background: linear-gradient(#e3e4e8, #c2c5cb);
    border-top: 1px solid #9ba0a9;
    box-sizing: border-box;
    white-space: nowrap;
  }
  span { padding: 0 5px 0 5px; border-right: 1px solid #aaaeb5; }
  #zoom { display: flex; align-items: center; margin-left: auto; }
  #view { padding: 2px 2px; background: #fbd368; box-shadow: inset 0 0 0 1px #c9993a; height: 10px; }
  #track { display: flex; align-items: center; width: 79px; height: 1px; background: #8b9098; }
  b { font-weight: normal; width: 33px; text-align: center; font-size: 10px; }
</style>
<span style="width: 37px">页面 1/1</span>
<span style="width: 44px; padding-right: 4px">中文(中国)</span>
<span style="width: 16px; display: flex; justify-content: center"><v-icon name="macro"></v-icon></span>
<div id="zoom">
  <div id="view"><v-icon name="normal"></v-icon></div>
  <v-icon name="fullscreen" style="margin: 0 2px 0 4px"></v-icon>
  <b>64%</b>
  <v-icon name="minus"></v-icon>
  <div id="track"><v-icon name="thumb" style="margin-left: 22px"></v-icon></div>
  <v-icon name="plus"></v-icon>
  <v-icon name="fit" style="margin-left: 5px"></v-icon>
  <v-icon name="pan" style="margin: 0 11px 0 8px"></v-icon>
  <v-icon name="switch" style="margin-right: 12px"></v-icon>
</div>`);

define("water-mark", `
<style>
  :host { display: block; pointer-events: none; }
  svg { display: block; }
</style>
<svg width="190" height="90" viewBox="762 453 190 90">
  <g fill="#f4f4f5" stroke="#b6b7bd" stroke-width="1.800" paint-order="stroke" stroke-linejoin="round">
    <text x="768" y="511" font-family="Liberation Sans" font-weight="bold" font-size="39" textLength="61" lengthAdjust="spacingAndGlyphs">Bai</text>
    <ellipse cx="835" cy="478" rx="6.300" ry="8.300"/>
    <ellipse cx="848" cy="465.500" rx="6.200" ry="8.800"/>
    <ellipse cx="864" cy="466.500" rx="6.200" ry="8.800" transform="rotate(12 864 466)"/>
    <ellipse cx="873.500" cy="482" rx="6.300" ry="8.300"/>
    <path d="M854 480C861 480 864 486 870 491C878 498 878 512 866 512H841C830 511 830 498 838 491C844 486 847 480 854 480Z"/>
    <text x="882" y="508" font-family="Noto Sans CJK SC" font-weight="bold" font-size="30" textLength="61">经验</text>
    <text x="769" y="534.500" font-family="Open Sans, sans-serif" font-size="19" textLength="176" lengthAdjust="spacingAndGlyphs">jingyan.baidu.com</text>
  </g>
  <text x="839" y="507" font-family="Liberation Sans" font-weight="bold" font-size="25" textLength="29" lengthAdjust="spacingAndGlyphs" fill="#bfc0c6">du</text>
</svg>`);

define("visio-window", `
<style>
  :host {
    display: flex;
    flex-direction: column;
    position: relative;
    width: 1000px;
    height: 563px;
    overflow: hidden;
    background: #c9cdd6;
  }
  #body { display: flex; flex: 1; min-height: 0; }
  #work { display: flex; flex-direction: column; width: 822px; margin-left: 4px; }
  #view {
    display: grid;
    grid-template-columns: 13px 801px 8px;
    grid-template-rows: 13px 401px;
  }
  #view scroll-bar { grid-area: 1 / 3 / 3 / 4; padding: 3px 0; }
  #corner { display: block; background: #f7f7f8; }
  water-mark { position: absolute; left: 762px; top: 453px; }
</style>
<title-bar>新建 Microsoft Visio 绘图.vsd - Microsoft Visio</title-bar>
<ribbon-tabs></ribbon-tabs>
<visio-ribbon></visio-ribbon>
<div id="body">
  <shapes-pane></shapes-pane>
  <div id="work">
    <div id="view">
      <svg id="corner" width="13" height="13"><path d="M0 6.500h13M6.500 0v13M12.500 0v13M0 12.500h13" stroke="#9aa0ac"/></svg>
      <mm-ruler length="801" origin="210.700"></mm-ruler>
      <mm-ruler vertical length="401" origin="537.400"></mm-ruler>
      <drawing-page></drawing-page>
      <scroll-bar start="120" size="118"></scroll-bar>
    </div>
    <page-tabs></page-tabs>
  </div>
</div>
<status-bar></status-bar>
<water-mark></water-mark>`);
</script>
</body>
</html>
